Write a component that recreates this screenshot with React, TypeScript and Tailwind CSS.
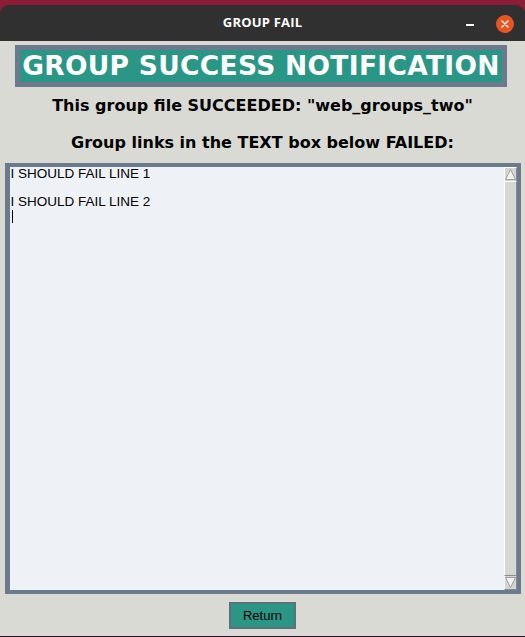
import React from 'react';

const dejavu = { fontFamily: '"DejaVu Sans", sans-serif' };

function Scrollbar() {
  return (
    <div className="flex w-[13px] flex-col bg-[#d4d4d4]">
      <div className="flex h-[14px] items-center justify-center border-l border-t border-white border-r border-r-[#8a8a8a]">
        <svg width="11" height="11" viewBox="0 0 11 11">
          <polygon points="5.5,0.5 10.5,10.5 0.5,10.5" fill="#f2f2f2" stroke="#8f8f8f" strokeWidth="0.8" />
        </svg>
      </div>
      <div className="flex-1 border-l border-t border-white border-r border-r-[#8a8a8a] border-b border-b-[#8a8a8a] bg-[#d6d6d6]" />
      <div className="flex h-[14px] items-center justify-center border-l border-white border-r border-r-[#8a8a8a] border-b border-b-[#8a8a8a]">
        <svg width="11" height="11" viewBox="0 0 11 11">
          <polygon points="0.5,0.5 10.5,0.5 5.5,10.5" fill="#f2f2f2" stroke="#8f8f8f" strokeWidth="0.8" />
        </svg>
      </div>
    </div>
  );
}

export default function App() {
  return (
    <div className="flex h-[637px] w-[525px] flex-col overflow-hidden bg-[#8c1c38] pt-[5px]">
      {/* title bar */}
      <div className="relative flex h-[36px] items-center justify-center rounded-t-[9px] bg-[#303030]">
        <span
          className="text-[13px] font-bold tracking-[0.2px] text-white"
          style={{ fontFamily: '"Open Sans", "DejaVu Sans", sans-serif' }}
        >
          GROUP FAIL
        </span>
        <div className="absolute right-[11px] top-[10px] flex items-center gap-[22px]">
          <div className="mt-[2px] h-[1.5px] w-[8px] bg-white" />
          <div className="flex h-[18px] w-[18px] items-center justify-center rounded-full bg-[#e95420]">
            <svg width="8" height="8" viewBox="0 0 8 8">
              <path d="M1 1 L7 7 M7 1 L1 7" stroke="white" strokeWidth="1.4" strokeLinecap="round" />
            </svg>
          </div>
        </div>
      </div>

      {/* window body */}
      <div className="flex flex-1 flex-col items-center bg-[#d9dad4] pt-[4px]" style={dejavu}>
        <div className="mr-[3px] flex h-[42px] w-[492px] items-center justify-center border-[5px] border-[#6b7a8c] bg-[#2a9686]">
          <span className="text-[26.5px] font-bold leading-none tracking-[0.3px] text-white">
            GROUP SUCCESS NOTIFICATION
          </span>
        </div>
        <div className="mt-[9px] h-[20px] text-[16px] font-bold leading-[20px] text-black">
          This group file SUCCEEDED: "web_groups_two"
        </div>
        <div className="mt-[17px] h-[20px] text-[16px] font-bold leading-[20px] text-black">
          Group links in the TEXT box below FAILED:
        </div>

        <div className="mt-[10px] flex h-[431px] w-[516px] border-b-[4px] border-l-[5px] border-r-[4px] border-t-[4px] border-[#6b7a8c]">
          <div
            className="flex-1 bg-[#eef2f7] pl-[1px] text-[13.5px] leading-[14px] text-black"
            style={{ fontFamily: '"Liberation Sans", Arial, sans-serif' }}
          >
            <div>I SHOULD FAIL LINE 1</div>
            <div className="h-[14px]" />
            <div>I SHOULD FAIL LINE 2</div>
            <div className="h-[14px] py-[1px] pl-[1px]">
              <div className="h-[13px] w-[1px] bg-black" />
            </div>
          </div>
          <Scrollbar />
        </div>

        <button
          type="button"
          className="mt-[8px] h-[27px] w-[67px] border-[2px] border-[#5e6f80] bg-[#2a9686] text-[13px] text-black"
          style={{ fontFamily: '"Liberation Sans", Arial, sans-serif' }}
        >
          Return
        </button>
      </div>
      <div className="h-[1px] bg-[#2c0b2a]" />
    </div>
  );
}
